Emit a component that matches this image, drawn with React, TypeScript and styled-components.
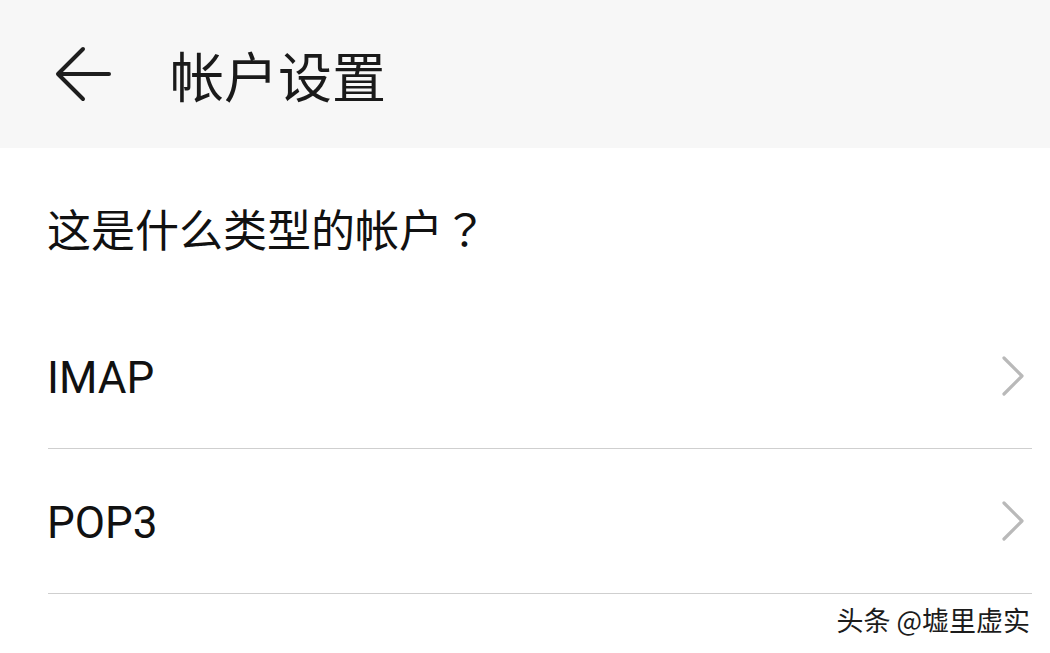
import React from "react";
import styled, { createGlobalStyle } from "styled-components";

const Global = createGlobalStyle`
  html, body { margin: 0; padding: 0; background: #ffffff; }
  body { font-family: Roboto, "Noto Sans CJK SC", "Noto Sans", sans-serif; color: #111; }
`;

const Page = styled.div`
  width: 1050px;
  height: 653px;
  overflow: hidden;
  background: #fff;
  display: flex;
  flex-direction: column;
`;

const Header = styled.header`
  height: 148px;
  background: #f7f7f7;
  display: flex;
  align-items: center;
  padding-left: 54px;
  gap: 58px;
`;

const BackButton = styled.div`
  width: 58px;
  height: 58px;
  display: flex;
  align-items: center;
  justify-content: center;
`;

const Title = styled.h1`
  margin: 0;
  font-family: "Noto Sans CJK SC", sans-serif;
  font-size: 54px;
  font-weight: 400;
  color: #1a1a1a;
  line-height: 1;
  margin-top: 2px;
`;

const Question = styled.div`
  height: 156px;
  display: flex;
  align-items: center;
  padding-left: 47px;
  font-family: "Noto Sans CJK SC", sans-serif;
  font-size: 44px;
  color: #111;
  padding-top: 4px;
  box-sizing: border-box;
`;

const FullwidthMark = styled.span`
  font-family: "Noto Sans CJK JP", "Noto Sans CJK SC", sans-serif;
`;

const List = styled.div`
  display: flex;
  flex-direction: column;
  margin: 0 18px 0 48px;
`;

const Row = styled.div`
  height: 145px;
  box-sizing: border-box;
  border-bottom: 1px solid #cfcfcf;
  display: flex;
  align-items: center;
  justify-content: space-between;
  padding-right: 6px;
`;

const RowLabel = styled.span`
  font-family: Roboto, "Liberation Sans", sans-serif;
  font-size: 44px;
  color: #111;
  margin-left: -1px;
  margin-top: 4px;
`;

const Watermark = styled.div`
  display: flex;
  justify-content: flex-end;
  padding: 6px 20px 0 0;
  font-family: "Noto Sans CJK SC", sans-serif;
  font-size: 27px;
  color: #1c1c1c;
  text-shadow: 1px 1px 0 #fff, -1px -1px 0 #fff, 1px -1px 0 #fff, -1px 1px 0 #fff;
`;

const BackArrow = () => (
  <svg width="58" height="58" viewBox="0 0 58 58" fill="none">
    <path
      d="M55 29 H5 M29 4 L4 29 L29 54"
      stroke="#1e1e1e"
      strokeWidth="4"
      strokeLinecap="round"
      strokeLinejoin="round"
    />
  </svg>
);

const Chevron = () => (
  <svg width="26" height="42" viewBox="0 0 26 42" fill="none">
    <path
      d="M4 3 L22 21 L4 39"
      stroke="#b9b9b9"
      strokeWidth="3.2"
      strokeLinecap="round"
      strokeLinejoin="round"
    />
  </svg>
);

const items = ["IMAP", "POP3"];

export default function App() {
  return (
    <>
      <Global />
      <Page>
        <Header>
          <BackButton>
            <BackArrow />
          </BackButton>
          <Title>帐户设置</Title>
        </Header>
        <Question>
          这是什么类型的帐户<FullwidthMark>？</FullwidthMark>
        </Question>
        <List>
          {items.map((it) => (
            <Row key={it}>
              <RowLabel>{it}</RowLabel>
              <Chevron />
            </Row>
          ))}
        </List>
        <Watermark>头条 @墟里虚实</Watermark>
      </Page>
    </>
  );
}
